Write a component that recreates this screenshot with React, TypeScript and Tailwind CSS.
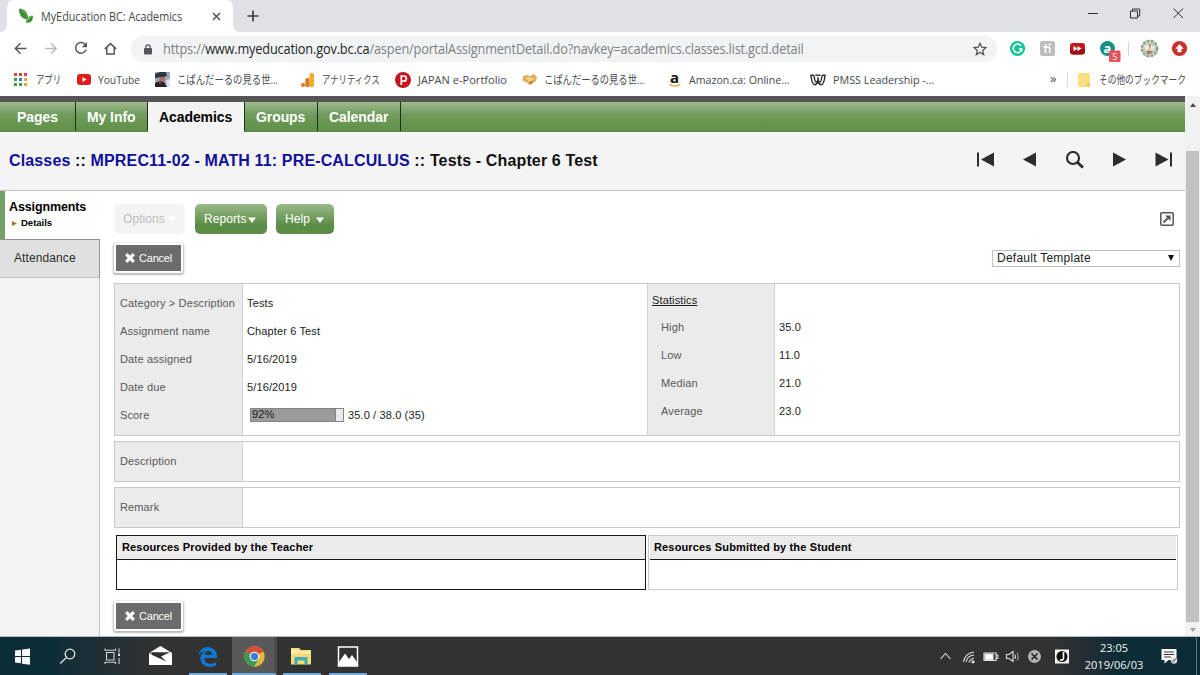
import React from "react";

const UI = "font-['Open_Sans','Noto_Sans_CJK_JP',sans-serif]";

function Leaf() {
  return (
    <svg className="block h-4 w-4 shrink-0" viewBox="0 0 16 16">
      <path d="M1.500 .5C6.500 1 10.500 4.500 10 11C4.500 11.500 .5 7 1.500 .5Z" fill="#4fa043" />
      <path d="M1.500 .5C4 4 7 7 10 11C4.500 11.500 .5 7 1.500 .5Z" fill="#3a8a3a" />
      <path d="M14.500 7.500C15.500 12 13 15 8 14.500C7 11 9.500 8 14.500 7.500Z" fill="#6db455" />
      <path d="M14.500 7.500C13 10 11 12 8 14.500C13 15 15.500 12 14.500 7.500Z" fill="#35853a" />
    </svg>
  );
}

function TabStrip() {
  return (
    <div className="flex h-8 w-full bg-[#dee1e6]">
      <div className="flex w-[7px] items-end bg-white">
        <div className="h-full w-full rounded-br-[7px] bg-[#dee1e6]" />
      </div>
      <div className="flex bg-[#dee1e6]">
        <div className="flex w-[226px] items-center rounded-t-[7px] bg-white pl-[11px]">
          <Leaf />
          <span className="ml-[7px] w-[171px] origin-left scale-x-[0.9] whitespace-nowrap pt-px text-[12px] leading-4 text-[#45494d]">MyEducation BC: Academics</span>
          <svg className="h-[9px] w-[9px] shrink-0" viewBox="0 0 9 9" stroke="#45494d" strokeWidth="1.4"><path d="M1 1l7 7M8 1l-7 7" /></svg>
        </div>
      </div>
      <div className="flex w-[8px] bg-white">
        <div className="h-full w-full rounded-bl-[7px] bg-[#dee1e6]" />
      </div>
      <svg className="ml-[6px] mt-[10px] h-[12px] w-[12px]" viewBox="0 0 12 12" stroke="#3c4043" strokeWidth="1.7"><path d="M6 .5v11M.5 6h11" /></svg>
      <svg className="ml-auto h-8 w-[120px]" viewBox="0 0 120 32" fill="none" stroke="#2c2e30" strokeWidth="1">
        <path d="M8 13.500h10M93.500 8.500l9.500 9.500M103 8.500l-9.500 9.500" />
        <path d="M50.500 11h7v7h-7zM52.500 11v-2h7.200v7h-2" />
      </svg>
    </div>
  );
}

function AddressBar() {
  return (
    <div className="flex h-8 w-full items-center bg-white pt-[2px]">
      <svg className="h-[28px] w-[131px] shrink-0" viewBox="0 0 131 28" fill="none" stroke="#54575b" strokeWidth="1.5">
        <path d="M26.500 13.500h-11M20.500 8.200L15.300 13.500l5.200 5.300" />
        <path d="M45 13.500h11M51 8.200l5.200 5.300l-5.200 5.300" stroke="#b9bbbe" />
        <path d="M85.400 9.900A5.300 5.300 0 1 0 86 14.700" />
        <path d="M87 7v5.300h-5.300z" fill="#54575b" stroke="none" />
        <path d="M104.800 13.900L110.500 8.600l5.700 5.300M106.700 12.700v6.300h7.600V12.700" />
      </svg>
      <div className="flex h-[26px] w-[866px] items-center rounded-full bg-[#f1f3f4]">
        <svg className="ml-[13px] h-[11px] w-[8px] shrink-0" viewBox="0 0 8 11"><rect y="4" width="8" height="6.500" rx="1" fill="#54575b" /><path d="M1.800 5V3a2.200 2.200 0 0 1 4.400 0v2" fill="none" stroke="#54575b" strokeWidth="1.200" /></svg>
        <span className="ml-[11px] inline-block origin-left scale-x-[0.91] whitespace-nowrap text-[14px] leading-5 tracking-[-0.18px] text-[#7c8186]">https://<span className="text-[#202427]">www.myeducation.gov.bc.ca</span>/aspen/portalAssignmentDetail.do?navkey=academics.classes.list.gcd.detail</span>
        <svg className="ml-auto mr-[10px] h-[14px] w-[14px] shrink-0" viewBox="0 0 14 14" fill="none" stroke="#54575b" strokeWidth="1.300"><path d="M7 1.300l1.700 3.900 4.200.4-3.200 2.800 1 4.200L7 10.400l-3.700 2.200 1-4.200L1.100 5.600l4.200-.4z" /></svg>
      </div>
      <svg className="h-[30px] w-[203px] shrink-0" viewBox="997 34 203 30">
        <circle cx="1017.500" cy="48.500" r="7.600" fill="#15c39a" />
        <path d="M1021 45.800a4.300 4.300 0 1 0 .8 3.200h-3" fill="none" stroke="#fff" strokeWidth="1.500" /><path d="M1021.800 48.500v3.200" stroke="#fff" strokeWidth="1" />
        <rect x="1040" y="41" width="15" height="15" rx="2" fill="#bdbdbd" />
        <path d="M1045.500 44v9M1045.500 49c0-3 4.200-3 4.200 0v4M1043.500 47h3.500M1048.500 44.500h2.500" fill="none" stroke="#fff" strokeWidth="1.500" />
        <rect x="1070" y="43" width="15" height="11.500" rx="3" fill="#c4161c" />
        <path d="M1070 49h15v3a3 3 0 0 1-3 2.500h-9a3 3 0 0 1-3-2.500z" fill="#9d1015" />
        <path d="M1073.500 46l4 2.600-4 2.600zM1077.500 46l4 2.600-4 2.600z" fill="#fff" />
        <circle cx="1107.500" cy="48.500" r="7.500" fill="#1b8f82" />
        <text x="1103.500" y="52.500" fill="#fff" fontSize="13" fontWeight="700" fontFamily="Open Sans">a</text>
        <rect x="1109" y="50.500" width="11.500" height="11.500" rx="1.500" fill="#e8515a" />
        <text x="1112.300" y="60" fill="#fff" fontSize="9" fontFamily="Open Sans">5</text>
        <path d="M1128.500 41.500v14" stroke="#d3d5d8" />
        <circle cx="1149.500" cy="48.500" r="9" fill="#c3ccba" />
        <circle cx="1149.500" cy="48.500" r="7.700" fill="none" stroke="#7f9a82" strokeWidth="2" strokeDasharray="2 2.200" />
        <path d="M1144 46l4-1 1 3-3 3zM1151 45l4 2-2 4-3-2z" fill="#f1ead8" /><path d="M1146 51h7l-2 3h-4zM1149 44l2 1-1 4z" fill="#b07a5e" />
        <circle cx="1179.500" cy="48.500" r="7.600" fill="#c9302c" />
        <path d="M1179.500 44.300l4.300 4.400h-2.300v3.600h-4v-3.600h-2.300z" fill="#fff" />
      </svg>
    </div>
  );
}

function Bookmark({ className, children }: { className: string; children: React.ReactNode }) {
  return <div className={"flex shrink-0 items-center whitespace-nowrap [&>svg]:shrink-0 " + className}>{children}</div>;
}

const appDots = ["#d8453b", "#d8453b", "#d8453b", "#3f9c57", "#3f78d8", "#eda83a", "#3f9c57", "#3f9c57", "#eda83a"];

function Bookmarks() {
  return (
    <div className="flex h-8 w-full items-center bg-white pb-px pl-[14px] text-[11px] leading-4 text-[#46494d]">
      <Bookmark className="w-[63px]">
        <svg className="mr-[9px] h-[13px] w-[13px]" viewBox="0 0 13 13">
          {appDots.map((c, i) => <rect key={i} x={(i % 3) * 5} y={Math.floor(i / 3) * 5} width="3" height="3" fill={c} />)}
        </svg>
        <span className="inline-block origin-left scale-x-[0.76]">アプリ</span>
      </Bookmark>
      <Bookmark className="w-[78px]">
        <svg className="mr-[7px] h-[11px] w-[14px]" viewBox="0 0 14 11"><rect width="14" height="11" rx="3" fill="#e11b1b" /><path d="M5.500 3l4 2.500-4 2.500z" fill="#fff" /></svg>
        <span className="inline-block origin-left scale-x-[0.93]">YouTube</span>
      </Bookmark>
      <Bookmark className="w-[146px]">
        <svg className="mr-[7px] h-[15px] w-[15px]" viewBox="0 0 15 15"><rect width="15" height="15" fill="#9aa6b8" /><path d="M0 2l5-2h6l1 4-4 1-8 1z" fill="#303642" /><path d="M4 5h6v4H5z" fill="#a86f62" /><path d="M0 11l5-2 4 1 3 5H0z" fill="#23252e" /><path d="M3 8l3 2-1 3z" fill="#b63b3b" /><path d="M11 8l4-1v8h-3z" fill="#dfe2e8" /></svg>
        <span className="inline-block origin-left scale-x-[0.85]">こぱんだーるの見る世...</span>
      </Bookmark>
      <Bookmark className="w-[94px]">
        <svg className="mr-[8px] h-[14px] w-[13px]" viewBox="0 0 13 14"><rect x="8.500" width="4.500" height="14" rx="1.500" fill="#f3a92c" /><rect x="4.300" y="5" width="4.200" height="9" rx="1.500" fill="#df7823" /><circle cx="2" cy="12" r="2" fill="#df7823" /></svg>
        <span className="inline-block origin-left scale-x-[0.76]">アナリティクス</span>
      </Bookmark>
      <Bookmark className="w-[128px]">
        <svg className="mr-[7px] h-[16px] w-[16px]" viewBox="0 0 16 16"><circle cx="8" cy="8" r="8" fill="#c4161f" /><path d="M6.300 13V4h2.500a2.500 2.500 0 0 1 0 5.200H6.500" fill="none" stroke="#fff" strokeWidth="1.700" /></svg>
        <span className="tracking-[0.03px]">JAPAN e-Portfolio</span>
      </Bookmark>
      <Bookmark className="w-[145px]">
        <svg className="mr-[7px] h-[12px] w-[14px]" viewBox="0 0 14 12"><path d="M0 2l4-1 3 1 4-2 3 3-1 4-4 2-2 2-4-3-3-1z" fill="#e5ac56" /><path d="M3 4l4-1 4 2-2 3-4-1z" fill="#f5d391" /><path d="M6 8l5-2-1 3-3 2z" fill="#c98739" /></svg>
        <span className="inline-block origin-left scale-x-[0.845]">こぱんだーるの見る世...</span>
      </Bookmark>
      <Bookmark className="w-[142px]">
        <span className="mr-[8px] flex w-[13px] flex-col items-center">
          <span className="h-[11px] text-[15px] font-bold leading-[9px] text-[#111]">a</span>
          <svg className="h-[3px] w-[12px]" viewBox="0 0 12 3"><path d="M.5 .5Q5.500 3.500 11.500 .5" fill="none" stroke="#ee9a28" strokeWidth="1.200" /></svg>
        </span>
        <span className="inline-block origin-left scale-x-[0.965]">Amazon.ca: Online...</span>
      </Bookmark>
      <Bookmark className="">
        <svg className="mr-[7px] h-[12px] w-[16px]" viewBox="0 0 16 12" fill="none" stroke="#2b2d30" strokeWidth="1.400" strokeLinejoin="round">
          <path d="M.8 1.200H3.600C4.200 1.200 4.500 8 6.300 8C7.500 8 8 5 8 3.500C8 5 8.500 8 9.700 8C11.500 8 11.800 1.200 12.400 1.200H15.200C14.500 6 13.800 10.800 11.300 10.800C9.500 10.800 8.500 9 8 7.500C7.500 9 6.500 10.800 4.700 10.800C2.200 10.800 1.500 6 .8 1.200Z" />
          <path d="M5.300 1.200H10.700" />
        </svg>
        <span className="inline-block origin-left scale-x-[0.98]">PMSS Leadership -...</span>
      </Bookmark>
      <div className="ml-auto flex w-[150px] items-center whitespace-nowrap [&>svg]:shrink-0">
        <span className="w-[17px] shrink-0 pb-[3px] text-[13px] leading-none">»</span>
        <div className="mr-[10px] h-[15px] w-px shrink-0 bg-[#d6d8da]" />
        <svg className="mr-[9px] h-[14px] w-[12px]" viewBox="0 0 12 14"><rect width="12" height="14" rx="1" fill="#f8df83" /><path d="M9 10h3v4H9z" fill="#edc95e" /></svg>
        <span className="inline-block origin-left scale-x-[0.79]">その他のブックマーク</span>
      </div>
    </div>
  );
}

function NavBar() {
  const item = "flex h-full items-center border-r-[1.5px] border-[#233018] pt-px text-white";
  return (
    <div className="flex h-[30px] w-full border-b border-[#668657] bg-linear-to-b from-[#9dba8f] via-[#6f9b5c] via-45% to-[#5f9146] text-[14px] font-bold leading-none tracking-[-0.08px]">
      <div className={item + " w-[76px] pl-[17px]"}>Pages</div>
      <div className={item + " w-[72px] pl-[11px]"}>My Info</div>
      <div className="-mb-px flex w-[96px] items-center bg-[#f4f4f4] pl-[11px] text-black">Academics</div>
      <div className={item + " w-[74px] border-l-[1.5px] pl-[11px]"}>Groups</div>
      <div className={item + " w-[83px] pl-[11px]"}>Calendar</div>
    </div>
  );
}

function Heading() {
  return (
    <div className="flex h-[59px] w-full items-center border-b border-[#c3c3c3] bg-[#f4f4f4] pl-[9px]">
      <h1 className="whitespace-nowrap text-[16px] font-bold leading-5 tracking-[0.14px] text-[#111]">
        <span className="text-[#10109a]">Classes</span> :: <span className="text-[#10109a]">MPREC11-02 - MATH 11: PRE-CALCULUS</span> :: Tests - Chapter 6 Test
      </h1>
      <svg className="ml-auto h-5 w-[210px]" viewBox="975 150.500 210 20" fill="#2d2d2d">
        <path d="M977 152h2v14h-2zM994 152v14l-13-7zM1036 152v14l-13-7zM1113 152v14l13-7zM1155.500 152v14l13-7zM1170 152h2v14h-2z" />
        <circle cx="1073" cy="157.500" r="6" fill="none" stroke="#2d2d2d" strokeWidth="2.200" />
        <path d="M1077.500 162l5.500 5" stroke="#2d2d2d" strokeWidth="3" />
      </svg>
    </div>
  );
}

function Sidebar() {
  return (
    <div className="flex w-[100px] shrink-0 flex-col bg-[#f4f4f4]">
      <div className="flex h-[48px] flex-col border-l-[5px] border-[#76a06b] bg-white pl-[4px] pt-[9px]">
        <div className="text-[12.500px] font-bold leading-[14px] tracking-[-0.12px] text-black">Assignments</div>
        <div className="mt-[2px] flex items-center pl-[3px] text-[9.500px] font-bold leading-[14px] text-black">
          <svg className="mr-[4px] h-[5px] w-[5px]" viewBox="0 0 5 5"><path d="M0 0l5 2.500L0 5z" fill="#a8742d" /></svg>Details
        </div>
      </div>
      <div className="flex h-[39px] items-center border-b border-r border-t border-b-[#c4c4c4] border-r-[#929292] border-t-[#929292] bg-[#e0e0e0] pb-px pl-[14px] text-[12px] tracking-[0.1px] text-[#2d2d2d]">Attendance</div>
      <div className="flex-1 border-r border-[#c3c3c3]" />
    </div>
  );
}

function Caret({ className = "" }: { className?: string }) {
  return <svg className={"h-[6px] w-[8px] " + className} viewBox="0 0 8 6"><path d="M0 .5h8L4 6z" fill="#fff" /></svg>;
}

function Cancel() {
  return (
    <button className="flex h-[30px] w-[69px] items-center justify-center rounded-[2px] border-2 border-white bg-[#6b6b6b] bg-clip-padding text-[11px] leading-none tracking-[-0.2px] text-white shadow-[0_1px_2px_1px_rgba(0,0,0,0.28)]">
      <svg className="mr-[4px] h-[10px] w-[10px]" viewBox="0 0 10 10" stroke="#fff" strokeWidth="3.200"><path d="M1.200 1.200l7.600 7.600M8.800 1.200l-7.600 7.600" /></svg>Cancel
    </button>
  );
}

const fields = ["Category > Description", "Assignment name", "Date assigned", "Date due", "Score"];
const values = ["Tests", "Chapter 6 Test", "5/16/2019", "5/16/2019"];
const stats = [["High", "35.0"], ["Low", "11.0"], ["Median", "21.0"], ["Average", "23.0"]];

function Details() {
  const row = "flex h-7 items-center whitespace-nowrap";
  return (
    <div className="mt-[10px] flex h-[153px] w-[1066px] border border-[#c8c8c8] bg-white">
      <div className="w-[128px] border-r border-[#d2d2d2] bg-[#ebebeb] pl-[5px] pt-[5px] text-[#585858]">
        {fields.map((f) => <div key={f} className={row}>{f}</div>)}
      </div>
      <div className="w-[404px] pl-[4px] pt-[5px]">
        {values.map((v, i) => <div key={i} className={row}>{v}</div>)}
        <div className={row}>
          <div className="mb-px ml-[3px] mr-[4px] flex h-[14px] w-[94px] border border-[#858585] bg-[#e9e9ed]">
            <div className="flex h-full w-[92%] items-center border-r border-[#858585] bg-[#9b9b9b] pl-px">92%</div>
          </div>
          35.0 / 38.0 (35)
        </div>
      </div>
      <div className="w-[128px] border-x border-[#d2d2d2] bg-[#ebebeb] pl-[4px] pt-[8px] text-[#585858]">
        <div className="flex h-[17px] items-center text-[#222] underline">Statistics</div>
        <div className="pl-[9px] pt-[4px]">{stats.map(([k]) => <div key={k} className={row}>{k}</div>)}</div>
      </div>
      <div className="pl-[4px] pt-[29px]">{stats.map(([k, v]) => <div key={k} className={row}>{v}</div>)}</div>
    </div>
  );
}

function Note({ label }: { label: string }) {
  return (
    <div className="mt-[5px] flex h-[41px] w-[1066px] border border-[#c8c8c8]">
      <div className="flex w-[128px] items-center border-r border-[#d2d2d2] bg-[#ebebeb] pl-[5px] text-[#585858]">{label}</div>
    </div>
  );
}

function Content() {
  const green = "flex h-[30px] items-center rounded-[5px] bg-linear-to-b from-[#9aba8b] to-[#5c8d45] to-70% text-white";
  return (
    <div className="flex min-w-0 flex-1 flex-col bg-white pl-[14px] text-[11px] leading-none tracking-[0.13px] text-[#1c1c1c]">
      <div className="mt-[13px] flex h-[30px] items-center text-[12px] tracking-[0.06px]">
        <div className="mr-[10px] flex h-[30px] w-[71px] items-center rounded-[5px] bg-[#f4f4f4] pl-[9px] text-[#bdbdbd]">Options<Caret className="ml-[3px]" /></div>
        <div className={green + " mr-[9px] w-[72px] pl-[9px]"}>Reports<Caret className="ml-[2px] mt-[2px]" /></div>
        <div className={green + " w-[58px] pl-[9px]"}>Help<Caret className="ml-[6px] mt-[2px]" /></div>
        <svg className="ml-auto mr-[11px] h-[14px] w-[14px]" viewBox="0 0 14 14" fill="none" stroke="#555"><rect x=".8" y=".8" width="12.400" height="12.400" rx="1" strokeWidth="1.500" /><path d="M3.500 10.500L9 5" strokeWidth="1.800" /><path d="M5 3.500h5.500V9z" fill="#555" stroke="none" /></svg>
      </div>
      <div className="mt-[9px] flex h-[30px] w-[1066px] items-center justify-between">
        <Cancel />
        <div className="flex h-[17px] w-[188px] items-center justify-between border border-[#c2c2c2] pl-[4px] pr-[5px] text-[12px] tracking-[0.25px]">
          Default Template
          <svg className="h-[6px] w-[6px]" viewBox="0 0 6 6"><path d="M0 0h6L3 6z" fill="#111" /></svg>
        </div>
      </div>
      <Details />
      <Note label="Description" />
      <Note label="Remark" />
      <div className="mt-[7px] flex h-[55px] gap-[2px] pl-[2px] text-[11px] font-bold tracking-[0.15px] text-black">
        <div className="flex w-[530px] flex-col border-[1.500px] border-[#191919]">
          <div className="flex h-[24px] items-center border-b-[1.500px] border-[#191919] bg-[#ebebeb] pl-[5px]">Resources Provided by the Teacher</div>
        </div>
        <div className="flex w-[530px] flex-col border border-[#c8c8c8] px-px">
          <div className="flex h-[24px] items-center border-b-[1.500px] border-[#191919] bg-[#ebebeb] pl-[4px]">Resources Submitted by the Student</div>
        </div>
      </div>
      <div className="mt-[11px]"><Cancel /></div>
    </div>
  );
}

function Scrollbar() {
  return (
    <div className="flex w-[15px] flex-col items-center bg-[#f1f1f1]">
      <svg className="mt-[7px] h-[4px] w-[6px]" viewBox="0 0 6 4"><path d="M3 0l3 4H0z" fill="#4c4c4c" /></svg>
      <div className="mt-[44px] h-[471px] w-[13px] bg-[#c1c1c1]" />
      <svg className="mt-[6px] h-[4px] w-[6px]" viewBox="0 0 6 4"><path d="M0 0h6L3 4z" fill="#a0a0a0" /></svg>
    </div>
  );
}

function Taskbar() {
  return (
    <div className="flex h-[39px] w-full border-t border-[#b4b9b9] bg-linear-to-r from-[#0a2d38] from-4% via-[#333233] via-14% to-[#333233]">
      <svg className="h-[38px] w-[380px] shrink-0" viewBox="0 637 380 38" fill="none">
        <path d="M15 650.500l6-.8v6.300h-6zM22 649.500l8-1v7.500h-8zM15 657h6v6.300l-6-.8zM22 657h8v7.800l-8-1z" fill="#f8f8f8" />
        <circle cx="70" cy="654" r="4.800" stroke="#e5e5e5" strokeWidth="1.300" /><path d="M66.500 657.500l-6.300 6" stroke="#e5e5e5" strokeWidth="1.300" />
        <path d="M106.500 652.500h7.500v7.500h-7.500zM105 648.500v1.800h10.500v-1.800M105 664v-1.800h10.500v1.800M119 648.500v4M119 658v6" stroke="#cfd3d3" strokeWidth="1.100" /><path d="M118 653.500h2v2.500h-2z" fill="#dedede" />
        <path d="M149 653l11.500-7 11.500 7v12h-23z" fill="#fff" /><path d="M151.500 652.300h18.500l-9 4.200 5.500 5-14.500-6.500z" fill="#303030" /><path d="M149 652.500l10.500 4.300" stroke="#303030" />
        <path d="M232 637h44v38h-44z" fill="#595959" /><path d="M274 637h3v38h-3z" fill="#4b4b4b" />
        <path d="M198.500 655.500C200 643.500 217.500 644 217.200 658H204.500C204.500 664.500 212 665.200 216 662v3.500C209 669 200 666 200.500 657.500C201 653.500 204 651.500 207 650.500C202 651 200 653 198.500 655.500ZM204.700 654.700h7.300c0-5-6.500-5-7.300 0Z" fill="#0f78d0" fillRule="evenodd" />
        <circle cx="254.500" cy="656.500" r="10.200" fill="#e4bd35" />
        <path d="M254.500 656.500L245.700 651.400A10.200 10.200 0 0 1 263.500 651.400z" fill="#d74c3e" />
        <path d="M254.500 656.500L245.700 651.400A10.200 10.200 0 0 0 253.800 666.700L259 659z" fill="#3c9953" />
        <path d="M254.500 651.400h9z" stroke="#d74c3e" /><circle cx="254.500" cy="656.500" r="4.800" fill="#fff" /><circle cx="254.500" cy="656.500" r="3.700" fill="#4279d8" />
        <path d="M291 648h8l2 2h10v14.500h-20z" fill="#f5da75" /><path d="M293 649.500h5v2h13v2h-20v-4z" fill="#ffefaa" /><path d="M294.500 657h13v7.500h-3v-4h-7v4h-3z" fill="#3fa9bd" />
        <rect x="338.500" y="647" width="19" height="19" stroke="#fff" strokeWidth="1.500" /><path d="M339 662l6-8.500 4 5.500 3-4 5 7v4h-18z" fill="#fff" />
        <path d="M189 673h38v2h-38zM232 673h44v2h-44zM283 673h38v2h-38zM329 673h38v2h-38z" fill="#6eaade" />
      </svg>
      <div className="ml-auto flex w-[268px] bg-linear-to-r from-[#333233] from-45% to-[#0b2b35] to-70% text-[#f5f5f5]">
        <svg className="h-[38px] w-[146px] shrink-0" viewBox="932 637 146 38" fill="none" stroke="#e0e0e0" strokeWidth="1.100">
          <path d="M940.500 659l5-5.500 5 5.500" />
          <path d="M963.500 662c.5-5.500 5-9.500 10.500-10M966.200 662c.5-4 3.500-6.500 7.800-7M969 662.500c.7-2.500 2-3.800 5-4.200" /><circle cx="973" cy="661.800" r="1.100" fill="#eee" />
          <path d="M984 653h12v7.500h-12z" /><path d="M985 654h8v5.500h-8z" fill="#fff" /><path d="M996 655h1.800v3.500H996" />
          <path d="M1006.500 654.500h2.500l4-3v10l-4-3h-2.500zM1014.800 654.500q1.500 2 0 4.200" /><path d="M1017 652.500q2.500 4 0 8" stroke="#999" />
          <circle cx="1034.500" cy="656.500" r="6.500" fill="#b3b3b3" stroke="none" /><path d="M1031.500 653.500l6 6M1037.500 653.500l-6 6" stroke="#222" strokeWidth="1.600" />
          <rect x="1055" y="649.500" width="14" height="14" fill="#f5f5f5" stroke="none" /><circle cx="1062" cy="656.500" r="5.500" fill="#111" stroke="none" /><path d="M1063.500 652v6c0 2-2 2.500-3.500 1.800" stroke="#fff" strokeWidth="1.600" />
        </svg>
        <div className="flex w-[72px] flex-col items-center pt-[2px] text-[11px] leading-[17px] tracking-[0.02px]"><span>23:05</span><span>2019/06/03</span></div>
        <svg className="h-[38px] w-[50px]" viewBox="1150 637 50 38"><path d="M1161.500 649h15v11h-8l-4 3.500v-3.500h-3z" fill="#fff" /><path d="M1164 652h10M1164 654.500h10M1164 657h7" stroke="#333" /><circle cx="1174" cy="660.500" r="3.200" fill="#dadada" /><path d="M1172 662.500l4-4" stroke="#333" /><path d="M1196.500 637v38" stroke="#66777c" /></svg>
      </div>
    </div>
  );
}

export default function App() {
  return (
    <div className={"flex h-[675px] w-[1200px] flex-col overflow-hidden " + UI}>
      <TabStrip />
      <AddressBar />
      <Bookmarks />
      <div className="flex h-[540px] w-full font-['Liberation_Sans',sans-serif]">
        <div className="flex w-[1185px] flex-col">
          <div className="h-[6px] shrink-0 bg-[#555]" />
          <NavBar />
          <Heading />
          <div className="flex min-h-0 flex-1"><Sidebar /><Content /></div>
        </div>
        <Scrollbar />
      </div>
      <Taskbar />
    </div>
  );
}
